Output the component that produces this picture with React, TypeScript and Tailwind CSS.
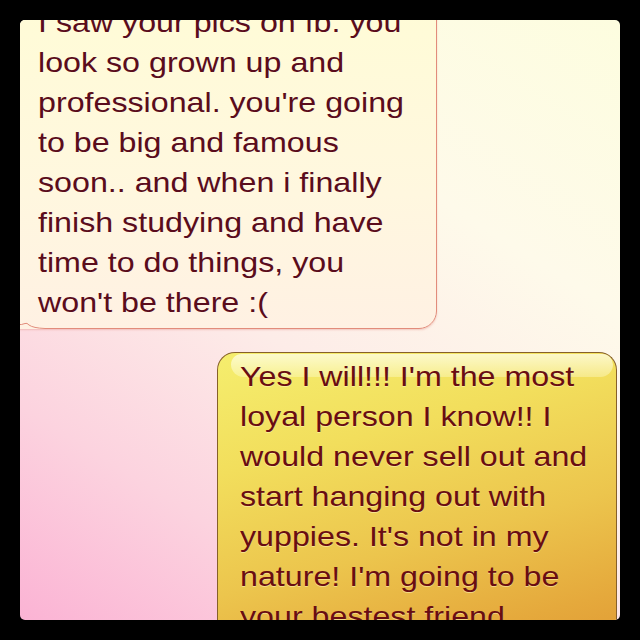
const theirLines = [
  "I saw your pics on fb. you",
  "look so grown up and",
  "professional. you're going",
  "to be big and famous",
  "soon.. and when i finally",
  "finish studying and have",
  "time to do things, you",
  "won't be there :(",
];

const myLines = [
  "Yes I will!!! I'm the most",
  "loyal person I know!! I",
  "would never sell out and",
  "start hanging out with",
  "yuppies. It's not in my",
  "nature! I'm going to be",
  "your bestest friend.",
];

function Lines({ lines }: { lines: string[] }) {
  return (
    <>
      {lines.map((line) => (
        <div key={line} className="origin-left scale-x-[1.15] whitespace-nowrap">
          {line}
        </div>
      ))}
    </>
  );
}

export default function App() {
  return (
    <div className="h-[640px] w-[640px] bg-black p-5 font-['Liberation_Sans',Arial,sans-serif] text-[28px] leading-[40px]">
      <div className="flex h-full flex-col overflow-hidden rounded-[5px] bg-[linear-gradient(212deg,#fdfddf_0%,#fefaea_30%,#fdece8_55%,#fcd3df_78%,#fbb3d4_100%)]">
        {/* their message, top cut off by the frame */}
        <div className="relative -ml-[12px] -mt-[30px] w-[429px] shrink-0 rounded-[18px] rounded-bl-none border border-[#e28c7b] bg-[linear-gradient(to_bottom,#fffcd6,#fff7df_60%,#fff1e3)] pb-[5px] pl-[29px] pt-[12px] text-[#5a0c1c] shadow-[0_1px_2px_rgba(220,120,110,0.35)]">
          <Lines lines={theirLines} />
          <svg className="absolute -bottom-px left-[8px]" width="28" height="9" viewBox="0 0 28 9">
            <path d="M0 8 L4 5 Q6 3 8 4.5 Q12 7 20 8 L28 8 L28 9 L0 9 Z" fill="#fff1e3" />
            <path d="M0 4.5 Q5 5 8 3.5 Q10 2.5 12 5 Q16 8 28 8.5" fill="none" stroke="#e28c7b" strokeWidth="1" />
          </svg>
        </div>

        {/* my reply, bottom cut off by the frame */}
        <div className="relative mr-[3px] mt-[23px] w-[400px] shrink-0 self-end rounded-t-[18px] border border-b-0 border-[#86602a] bg-[linear-gradient(165deg,#f5ee6e_0%,#f2de5c_30%,#ecc54d_60%,#e5a93c_85%,#e09a34_100%)] pb-4 pl-[22px] pt-[4px] text-[#690d12] [text-shadow:0_1px_0_rgba(255,250,200,0.5)]">
          <div className="absolute left-[13px] right-[3px] top-px h-[23px] rounded-[12px] rounded-b-[14px] bg-[linear-gradient(to_bottom,rgba(255,255,235,0.75),rgba(255,255,220,0.35))]" />
          <div className="relative">
            <Lines lines={myLines} />
          </div>
        </div>
      </div>
    </div>
  );
}
